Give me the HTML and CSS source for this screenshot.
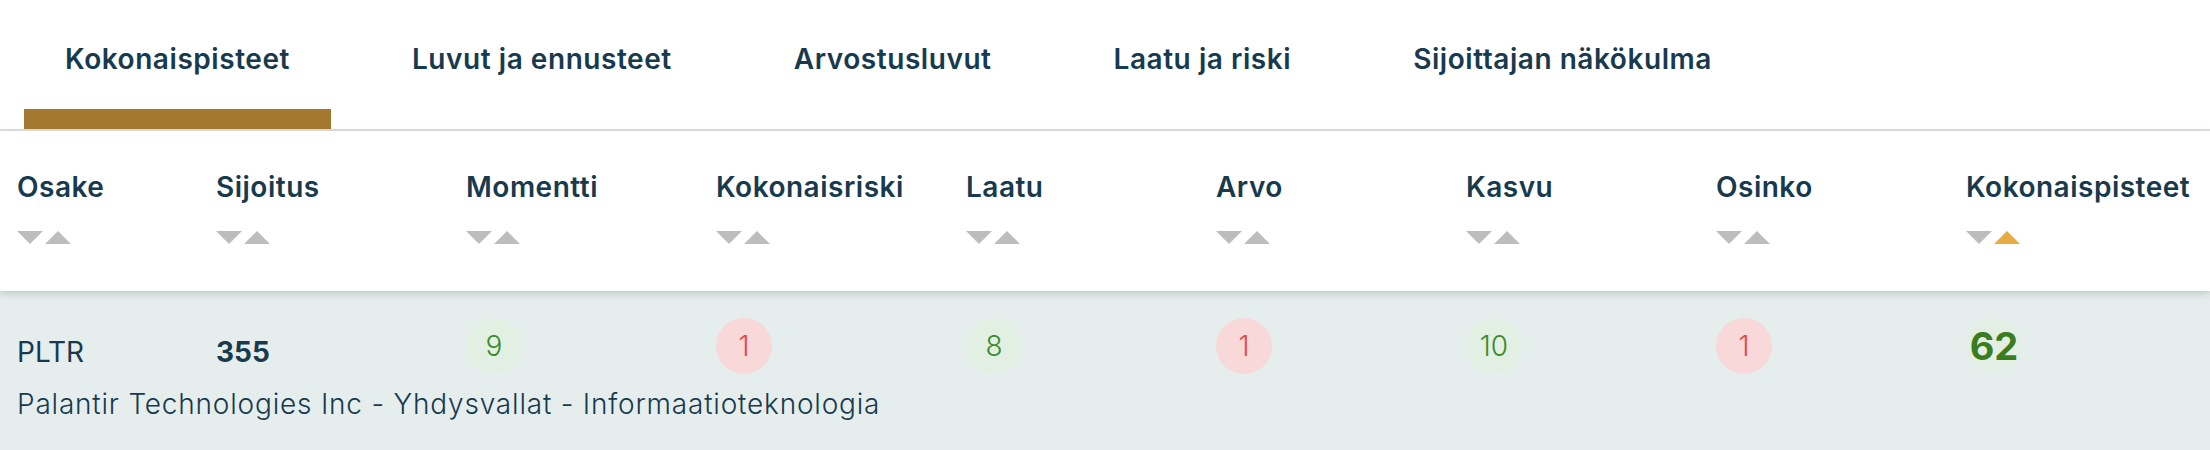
FILE: index.html
```html
<!DOCTYPE html>
<html lang="fi">
<head>
<meta charset="utf-8">
<title>Kokonaispisteet</title>
<link rel="stylesheet" href="styles.css">
</head>
<body>
<nav class="tabs">
  <div class="tab active"><span class="tab-label">Kokonaispisteet</span></div>
  <div class="tab"><span class="tab-label">Luvut ja ennusteet</span></div>
  <div class="tab"><span class="tab-label">Arvostusluvut</span></div>
  <div class="tab"><span class="tab-label">Laatu ja riski</span></div>
  <div class="tab"><span class="tab-label">Sijoittajan näkökulma</span></div>
</nav>
<section class="table">
  <div class="thead">
    <div class="th"><span class="th-label">Osake</span><span class="sort"><i class="down"></i><i class="up"></i></span></div>
    <div class="th"><span class="th-label">Sijoitus</span><span class="sort"><i class="down"></i><i class="up"></i></span></div>
    <div class="th"><span class="th-label">Momentti</span><span class="sort"><i class="down"></i><i class="up"></i></span></div>
    <div class="th"><span class="th-label">Kokonaisriski</span><span class="sort"><i class="down"></i><i class="up"></i></span></div>
    <div class="th"><span class="th-label">Laatu</span><span class="sort"><i class="down"></i><i class="up"></i></span></div>
    <div class="th"><span class="th-label">Arvo</span><span class="sort"><i class="down"></i><i class="up"></i></span></div>
    <div class="th"><span class="th-label">Kasvu</span><span class="sort"><i class="down"></i><i class="up"></i></span></div>
    <div class="th"><span class="th-label">Osinko</span><span class="sort"><i class="down"></i><i class="up"></i></span></div>
    <div class="th"><span class="th-label">Kokonaispisteet</span><span class="sort"><i class="down"></i><i class="up on"></i></span></div>
  </div>
  <div class="row">
    <div class="td text">PLTR</div>
    <div class="td text strong">355</div>
    <div class="td"><span class="badge good">9</span></div>
    <div class="td"><span class="badge bad">1</span></div>
    <div class="td"><span class="badge good">8</span></div>
    <div class="td"><span class="badge bad">1</span></div>
    <div class="td"><span class="badge good">10</span></div>
    <div class="td"><span class="badge bad">1</span></div>
    <div class="td"><span class="badge total">62</span></div>
    <div class="desc">Palantir Technologies Inc - Yhdysvallat - Informaatioteknologia</div>
  </div>
</section>
</body>
</html>
```

FILE: styles.css
```css
* { box-sizing: border-box; }

body {
  margin: 0;
  background: #ffffff;
  font-family: Inter, "Open Sans", "Liberation Sans", sans-serif;
  color: #173a4e;
}

.tabs {
  display: flex;
  gap: 40px;
  padding-left: 24px;
  height: 131px;
  border-bottom: 2px solid #dedede;
}

.tab {
  padding: 43px 41px 0;
  height: 129px;
}

.tab.active {
  border-bottom: 20px solid #a4782f;
}

.tab-label {
  display: block;
  font-size: 28px;
  line-height: 32px;
  font-weight: 600;
  letter-spacing: 0.55px;
  white-space: nowrap;
}

.thead,
.row {
  display: grid;
  grid-template-columns: 199px repeat(7, 250px) 1fr;
  padding-left: 17px;
}

.thead {
  position: relative;
  z-index: 1;
  height: 160px;
  padding-top: 40px;
  background: #ffffff;
  box-shadow: 0 3px 7px rgba(60, 80, 80, 0.22);
}

.th {
  display: flex;
  flex-direction: column;
  align-items: flex-start;
}

.th-label {
  font-size: 28px;
  line-height: 32px;
  font-weight: 600;
  letter-spacing: 0.5px;
  white-space: nowrap;
}

.sort {
  display: flex;
  gap: 2px;
  margin-top: 28px;
}

.sort i {
  display: block;
  width: 0;
  height: 0;
  border-left: 13px solid transparent;
  border-right: 13px solid transparent;
}

.sort .down { border-top: 13px solid #bdbdbd; }
.sort .up { border-bottom: 13px solid #bdbdbd; }
.sort .up.on { border-bottom-color: #eaab42; }

.row {
  background: #e6eeed;
  height: 160px;
  padding-top: 27px;
  grid-template-rows: auto auto;
  align-content: start;
}

.td {
  height: 56px;
}

.td.text {
  padding-top: 18px;
  font-size: 28px;
  line-height: 32px;
  font-weight: 400;
}

.td.strong { font-weight: 700; }

.badge {
  display: flex;
  align-items: center;
  justify-content: center;
  width: 56px;
  height: 56px;
  border-radius: 50%;
  font-size: 28px;
  font-weight: 300;
}

.badge.good { background: #e2efe3; color: #3b8a27; }
.badge.bad { background: #f8d8d9; color: #e4483f; }
.badge.total {
  background: #e3eee4;
  color: #3a7d21;
  font-size: 38px;
  font-weight: 700;
  white-space: nowrap;
}

.desc {
  grid-column: 1 / -1;
  margin-top: 14px;
  font-size: 28px;
  line-height: 32px;
  font-weight: 300;
  letter-spacing: 0.8px;
  white-space: nowrap;
}
```
